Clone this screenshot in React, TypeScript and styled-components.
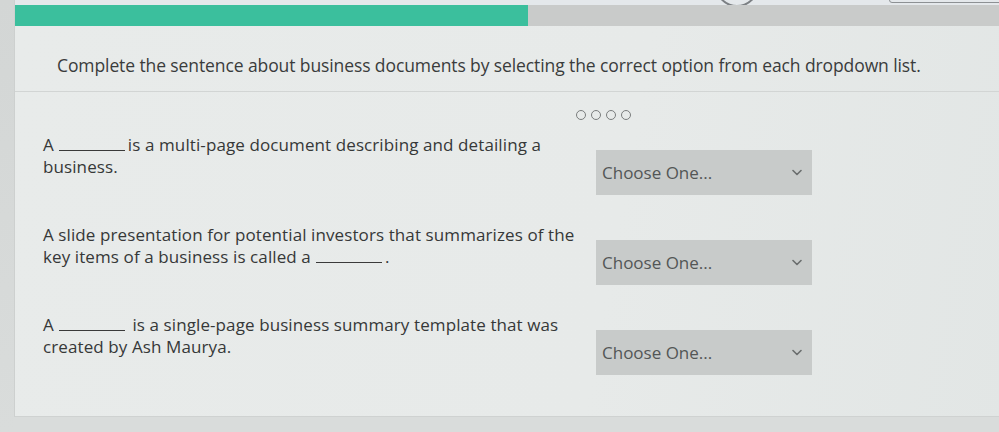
import React from "react";
import styled, { createGlobalStyle } from "styled-components";

const GlobalStyle = createGlobalStyle`
  html, body {
    margin: 0;
    padding: 0;
    background: #d9dcdb;
  }
  body {
    font-family: "Open Sans", "Noto Sans", sans-serif;
    color: #363838;
  }
`;

type Question = {
  before: string;
  after: string;
};

const questions: Question[] = [
  {
    before: "A",
    after: "is a multi-page document describing and detailing a business.",
  },
  {
    before:
      "A slide presentation for potential investors that summarizes of the key items of a business is called a",
    after: ".",
  },
  {
    before: "A",
    after: " is a single-page business summary template that was created by Ash Maurya.",
  },
];

const Page = styled.div`
  width: 999px;
  height: 432px;
  overflow: hidden;
  display: flex;
  background: #d9dcdb;
`;

const SideStrip = styled.div`
  width: 14px;
  flex-shrink: 0;
  background: linear-gradient(180deg, #d3d6d5, #d9dcdb);
`;

const Card = styled.main`
  flex: 1;
  height: 416px;
  display: flex;
  flex-direction: column;
  background: linear-gradient(100deg, #e8ebea 0%, #e7eae9 60%, #e2e6e5 100%);
  border-bottom: 1px solid #cfd2d1;
  border-left: 1px solid #cdd0cf;
`;

const TopStrip = styled.div`
  height: 5px;
  display: flex;
  background: #e4e8eb;
  overflow: hidden;
`;

const PeekCircle = styled.div`
  width: 40px;
  height: 40px;
  margin: -37px 0 0 700px;
  border: 2px solid #7c8084;
  border-radius: 50%;
  flex-shrink: 0;
`;

const PeekBox = styled.div`
  width: 120px;
  height: 30px;
  margin: -29px 0 0 130px;
  border: 1px solid #8d9194;
  border-radius: 3px;
  flex-shrink: 0;
`;

const Progress = styled.div`
  height: 21px;
  display: flex;
  background: #c9cbca;
`;

const ProgressFill = styled.div<{ $width: number }>`
  width: ${(p) => p.$width}px;
  background: #3bbf9d;
`;

const Heading = styled.h1`
  margin: 28px 0 0 42px;
  font-size: 17.5px;
  font-weight: 400;
  line-height: 22px;
  color: #3a3c3c;
  letter-spacing: -0.1px;
  white-space: nowrap;
`;

const Divider = styled.hr`
  margin: 15px 0 0;
  border: 0;
  border-top: 1px solid #d2d5d4;
`;

const Dots = styled.div`
  display: flex;
  gap: 5px;
  margin: 18px 0 0 561px;
`;

const Dot = styled.span`
  width: 8px;
  height: 8px;
  border: 1.5px solid #7a7d7d;
  border-radius: 50%;
`;

const Rows = styled.div`
  display: flex;
  flex-direction: column;
  margin: 14px 0 0 28px;
`;

const Row = styled.div`
  display: grid;
  grid-template-columns: 548px 216px;
  column-gap: 5px;
  height: 90px;
  align-items: start;
`;

const Prompt = styled.p`
  margin: 0;
  font-size: 17px;
  line-height: 22px;
  letter-spacing: 0.1px;
  color: #363838;
`;

const Blank = styled.span`
  display: inline-block;
  width: 66px;
  height: 12px;
  margin: 0 3px 0 5px;
  border-bottom: 1px solid #3a3a3a;
`;

const Select = styled.div`
  margin-top: 16px;
  height: 45px;
  display: flex;
  align-items: center;
  justify-content: space-between;
  padding: 0 10px 0 6px;
  background: #c8cbca;
  color: #535656;
  font-size: 17px;
`;

const Chevron = () => (
  <svg width="10" height="7" viewBox="0 0 10 7" fill="none">
    <path d="M1 1.5 5 5.5 9 1.5" stroke="#6a6d6d" strokeWidth="1.6" strokeLinecap="round" strokeLinejoin="round" />
  </svg>
);

const App: React.FC = () => {
  return (
    <Page>
      <GlobalStyle />
      <SideStrip />
      <Card>
        <TopStrip>
          <PeekCircle />
          <PeekBox />
        </TopStrip>
        <Progress>
          <ProgressFill $width={513} />
        </Progress>
        <Heading>
          Complete the sentence about business documents by selecting the correct option from each dropdown list.
        </Heading>
        <Divider />
        <Dots>
          {[0, 1, 2, 3].map((i) => (
            <Dot key={i} />
          ))}
        </Dots>
        <Rows>
          {questions.map((q, i) => (
            <Row key={i}>
              <Prompt>
                {q.before}
                <Blank />
                {q.after}
              </Prompt>
              <Select>
                <span>Choose One...</span>
                <Chevron />
              </Select>
            </Row>
          ))}
        </Rows>
      </Card>
    </Page>
  );
};

export default App;
